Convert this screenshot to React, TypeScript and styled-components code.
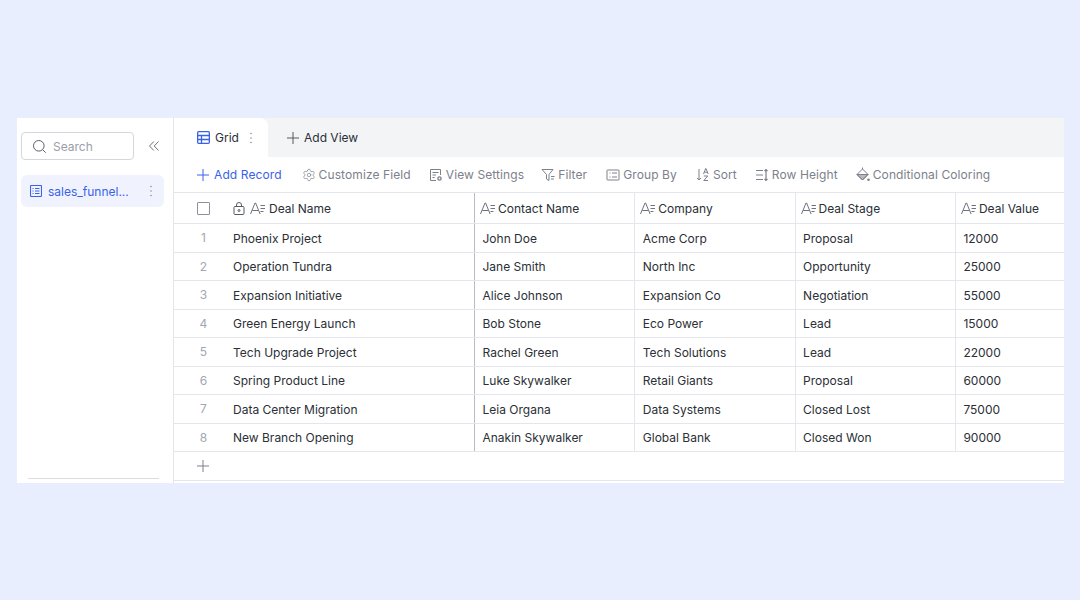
import React from "react";
import styled, { createGlobalStyle } from "styled-components";
import { Settings } from "lucide-react";

const GlobalStyle = createGlobalStyle`
  html, body {
    margin: 0;
    padding: 0;
    background: #e8eefe;
    font-family: Inter, "Noto Sans", sans-serif;
  }
`;

const Page = styled.div`
  width: 1080px;
  height: 600px;
  padding: 118px 16px 0 17px;
  box-sizing: border-box;
  overflow: hidden;
`;

const Card = styled.div`
  display: flex;
  width: 1047px;
  height: 365px;
  background: #fff;
  overflow: hidden;
`;

const Sidebar = styled.aside`
  width: 156px;
  flex: none;
  display: flex;
  flex-direction: column;
  border-right: 1px solid #e5e6eb;
  box-sizing: content-box;
`;

const SearchRow = styled.div`
  display: flex;
  align-items: center;
  padding: 14px 0 0 4px;
  height: 28px;
`;

const SearchBox = styled.div`
  width: 113px;
  height: 28px;
  box-sizing: border-box;
  border: 1px solid #d5d7dd;
  border-radius: 4px;
  display: flex;
  align-items: center;
  gap: 6px;
  padding-left: 10px;
  font-size: 12px;
  color: #9a9ea8;
`;

const Collapse = styled.div`
  display: flex;
  margin-left: 15px;
`;

const SheetItem = styled.div`
  display: flex;
  align-items: center;
  margin: 15px 9px 0 4px;
  height: 32px;
  padding-left: 9px;
  background: #f0f3fe;
  border-radius: 6px;
  color: #3a62e8;
  font-size: 12px;
  gap: 6px;
`;

const SheetName = styled.span`
  width: 95px;
  white-space: nowrap;
`;

const SideSpacer = styled.div`
  flex: 1;
`;

const SideLine = styled.div`
  height: 1px;
  margin: 0 14px 4px 11px;
  background: #dcdde3;
`;

const Main = styled.main`
  flex: 1;
  min-width: 0;
  display: flex;
  flex-direction: column;
`;

const TabBar = styled.div`
  height: 39px;
  flex: none;
  background: #f3f4f6;
  display: flex;
  align-items: center;
`;

const ActiveTab = styled.div`
  width: 94px;
  height: 39px;
  box-sizing: border-box;
  background: #fff;
  border-top-right-radius: 8px;
  display: flex;
  align-items: center;
  padding-left: 23px;
  gap: 5px;
  font-size: 12px;
  color: #2b2f36;
`;

const TabKebab = styled.span`
  display: flex;
  margin-left: 5px;
`;

const AddView = styled.div`
  display: flex;
  align-items: center;
  margin-left: 19px;
  gap: 5px;
  font-size: 12px;
  color: #2b2f36;
`;

const Toolbar = styled.div`
  height: 35px;
  flex: none;
  display: flex;
  align-items: center;
  padding-left: 23px;
  border-bottom: 1px solid #e5e6eb;
  box-sizing: content-box;
`;

const Tool = styled.div<{ $accent?: boolean; $gap: number }>`
  display: flex;
  align-items: center;
  gap: ${(p) => (p.$accent ? 5 : 3)}px;
  margin-right: ${(p) => p.$gap}px;
  font-size: 12px;
  letter-spacing: 0.1px;
  white-space: nowrap;
  color: ${(p) => (p.$accent ? "#3a62e8" : "#7c818b")};
`;

const Table = styled.div`
  flex: 1;
  min-height: 0;
  display: flex;
  flex-direction: column;
`;

const HeaderRow = styled.div`
  height: 31px;
  box-sizing: border-box;
  flex: none;
  display: flex;
  border-bottom: 1px solid #e5e6eb;
`;

const Row = styled.div`
  height: 28.5px;
  box-sizing: border-box;
  flex: none;
  display: flex;
  border-bottom: 1px solid #e5e6eb;
`;

const IndexCell = styled.div`
  width: 59px;
  flex: none;
  display: flex;
  align-items: center;
  justify-content: center;
  font-size: 12px;
  color: #a3a7b0;
`;

const Cell = styled.div<{ $wide?: boolean }>`
  width: ${(p) => (p.$wide ? "242px" : "160.3px")};
  flex: none;
  box-sizing: border-box;
  display: flex;
  align-items: center;
  padding-left: ${(p) => (p.$wide ? "0" : "7.5px")};
  padding-top: 1px;
  font-size: 12px;
  color: #2b2f36;
  white-space: nowrap;
  border-right: 1px solid ${(p) => (p.$wide ? "#b9bcc6" : "#e5e6eb")};
`;

const HeadCell = styled(Cell)`
  padding-left: ${(p) => (p.$wide ? "0" : "5px")};
  padding-top: 0;
  gap: ${(p) => (p.$wide ? 3 : 2)}px;
`;

const LockSlot = styled.span`
  display: flex;
  margin-right: 2px;
`;

const AddRow = styled.div`
  height: 28.5px;
  box-sizing: border-box;
  flex: none;
  display: flex;
  align-items: center;
  padding-left: 23px;
  border-bottom: 1px solid #e5e6eb;
`;

const Checkbox = styled.span`
  width: 13px;
  height: 13px;
  box-sizing: border-box;
  border: 1.5px solid #8d919b;
  border-radius: 1px;
`;

const Svg = styled.svg`
  flex: none;
  fill: none;
  stroke: currentColor;
  stroke-width: 1;
`;

type IconProps = { size?: number; color?: string };

const Plus = ({ size = 12, color }: IconProps) => (
  <Svg width={size} height={size} viewBox="0 0 12 12" style={{ color }}>
    <path d="M6 0v12M0 6h12" />
  </Svg>
);

const Kebab = () => (
  <Svg width={4} height={12} viewBox="0 0 4 12" style={{ color: "#8d919b" }}>
    <circle cx="2" cy="1.5" r="0.8" fill="currentColor" stroke="none" />
    <circle cx="2" cy="6" r="0.8" fill="currentColor" stroke="none" />
    <circle cx="2" cy="10.5" r="0.8" fill="currentColor" stroke="none" />
  </Svg>
);

const TextField = () => (
  <Svg width={16} height={13} viewBox="0 0 16 13" style={{ color: "#6f737c" }}>
    <path d="M0.500 12 5 1h0.600l4.500 11M2.200 8.500h6.200" />
    <path d="M10.500 3.500h4.500M10.500 6.500h4.500M10.500 9.500h3" />
  </Svg>
);

const Lock = () => (
  <Svg width={12} height={13} viewBox="0 0 12 13" style={{ color: "#555a63" }}>
    <rect x="1" y="4.500" width="10" height="8" rx="1" />
    <path d="M3.500 4.500V3a2.500 2.500 0 0 1 5 0v1.500" />
    <circle cx="6" cy="8.500" r="1" />
  </Svg>
);

const ViewSettings = () => (
  <Svg width={14} height={14} viewBox="0 0 14 14">
    <path d="M7 12.500H1.500v-11h10V7" />
    <path d="M3.500 4.500h6M3.500 7h3.500M3.500 9.500h2" />
    <circle cx="10.500" cy="10.500" r="1.600" strokeWidth="1.400" />
  </Svg>
);

const Funnel = () => (
  <Svg width={14} height={14} viewBox="0 0 14 14">
    <path d="M1 1.500h11l-4 5v6L5.500 11V6.500z" />
    <path d="M10 8.500h3.500M10 11h3" />
  </Svg>
);

const GroupBy = () => (
  <Svg width={14} height={14} viewBox="0 0 14 14">
    <rect x="1" y="2" width="12" height="10" rx="0.500" />
    <path d="M3.500 5h1M6 5h5M3.500 9h1M6 9h5" />
  </Svg>
);

const SortIcon = () => (
  <Svg width={14} height={15} viewBox="0 0 14 15">
    <path d="M3 2v11M1 11l2 2 2-2" />
    <path d="M7.500 7l2.200-5.500h.3L12.200 7M8.300 5.200h3.200" />
    <path d="M7.800 9h4l-4 4.500h4.200" />
  </Svg>
);

const RowHeight = () => (
  <Svg width={14} height={14} viewBox="0 0 14 14">
    <path d="M1 2.500h7M1 7h7M1 11.500h7" />
    <path d="M11 1.500v11M9.500 3l1.500-1.500L12.500 3M9.500 11l1.500 1.500 1.500-1.500" strokeWidth="1.200" />
  </Svg>
);

const PaintBucket = () => (
  <Svg width={14} height={15} viewBox="0 0 14 15">
    <path d="M1 7.500h11L6.500 13z" fill="currentColor" fillOpacity="0.55" />
    <path d="M6.500 2 12 7.500 6.500 13 1 7.500z" />
    <path d="M6.500 2V.5" />
    <circle cx="12.500" cy="12.800" r="1.300" fill="currentColor" stroke="none" />
  </Svg>
);

const GridIcon = () => (
  <Svg width={13} height={13} viewBox="0 0 13 13" style={{ color: "#3a62e8", strokeWidth: 1.3 }}>
    <rect x="0.650" y="0.650" width="11.700" height="11.700" rx="1" />
    <path d="M0.650 4.500h11.700M0.650 8.500h11.700M4.500 4.500v7.800" />
  </Svg>
);

const SheetIcon = () => (
  <Svg width={12} height={12} viewBox="0 0 12 12" style={{ color: "#3a62e8", strokeWidth: 1.1 }}>
    <rect x="0.500" y="0.500" width="11" height="11" rx="1" />
    <path d="M2.500 3.500h1M5 3.500h4.500M2.500 6h1M5 6h4.500M2.500 8.500h1M5 8.500h4.500" />
  </Svg>
);

const SearchIcon = () => (
  <Svg width={15} height={15} viewBox="0 0 15 15" style={{ color: "#5c606a" }}>
    <circle cx="6.800" cy="6.800" r="5.300" />
    <path d="m10.700 10.700 3 3" />
  </Svg>
);

const ChevronsLeft = () => (
  <Svg width={10} height={10} viewBox="0 0 10 10" style={{ color: "#6f737c" }}>
    <path d="M4.800.5.500 5l4.300 4.500M9.500.5 5.200 5l4.300 4.500" />
  </Svg>
);

const tools = [
  { label: "Customize Field", icon: <Settings size={14} strokeWidth={1.2} />, gap: 18 },
  { label: "View Settings", icon: <ViewSettings />, gap: 17 },
  { label: "Filter", icon: <Funnel />, gap: 19 },
  { label: "Group By", icon: <GroupBy />, gap: 19 },
  { label: "Sort", icon: <SortIcon />, gap: 18 },
  { label: "Row Height", icon: <RowHeight />, gap: 18 },
  { label: "Conditional Coloring", icon: <PaintBucket />, gap: 0 },
];

const columns = ["Contact Name", "Company", "Deal Stage", "Deal Value"];

const records = [
  ["Phoenix Project", "John Doe", "Acme Corp", "Proposal", "12000"],
  ["Operation Tundra", "Jane Smith", "North Inc", "Opportunity", "25000"],
  ["Expansion Initiative", "Alice Johnson", "Expansion Co", "Negotiation", "55000"],
  ["Green Energy Launch", "Bob Stone", "Eco Power", "Lead", "15000"],
  ["Tech Upgrade Project", "Rachel Green", "Tech Solutions", "Lead", "22000"],
  ["Spring Product Line", "Luke Skywalker", "Retail Giants", "Proposal", "60000"],
  ["Data Center Migration", "Leia Organa", "Data Systems", "Closed Lost", "75000"],
  ["New Branch Opening", "Anakin Skywalker", "Global Bank", "Closed Won", "90000"],
];

const App = () => (
  <Page>
    <GlobalStyle />
    <Card>
      <Sidebar>
        <SearchRow>
          <SearchBox>
            <SearchIcon />
            Search
          </SearchBox>
          <Collapse>
            <ChevronsLeft />
          </Collapse>
        </SearchRow>
        <SheetItem>
          <SheetIcon />
          <SheetName>sales_funnel...</SheetName>
          <Kebab />
        </SheetItem>
        <SideSpacer />
        <SideLine />
      </Sidebar>
      <Main>
        <TabBar>
          <ActiveTab>
            <GridIcon />
            Grid
            <TabKebab>
              <Kebab />
            </TabKebab>
          </ActiveTab>
          <AddView>
            <Plus color="#555a63" />
            Add View
          </AddView>
        </TabBar>
        <Toolbar>
          <Tool $accent $gap={20}>
            <Plus />
            Add Record
          </Tool>
          {tools.map((t) => (
            <Tool key={t.label} $gap={t.gap}>
              {t.icon}
              {t.label}
            </Tool>
          ))}
        </Toolbar>
        <Table>
          <HeaderRow>
            <IndexCell>
              <Checkbox />
            </IndexCell>
            <HeadCell $wide>
              <LockSlot>
                <Lock />
              </LockSlot>
              <TextField />
              Deal Name
            </HeadCell>
            {columns.map((c) => (
              <HeadCell key={c}>
                <TextField />
                {c}
              </HeadCell>
            ))}
          </HeaderRow>
          {records.map((r, i) => (
            <Row key={r[0]}>
              <IndexCell>{i + 1}</IndexCell>
              <Cell $wide>{r[0]}</Cell>
              {r.slice(1).map((v) => (
                <Cell key={v}>{v}</Cell>
              ))}
            </Row>
          ))}
          <AddRow>
            <Plus color="#7c818b" />
          </AddRow>
        </Table>
      </Main>
    </Card>
  </Page>
);

export default App;
